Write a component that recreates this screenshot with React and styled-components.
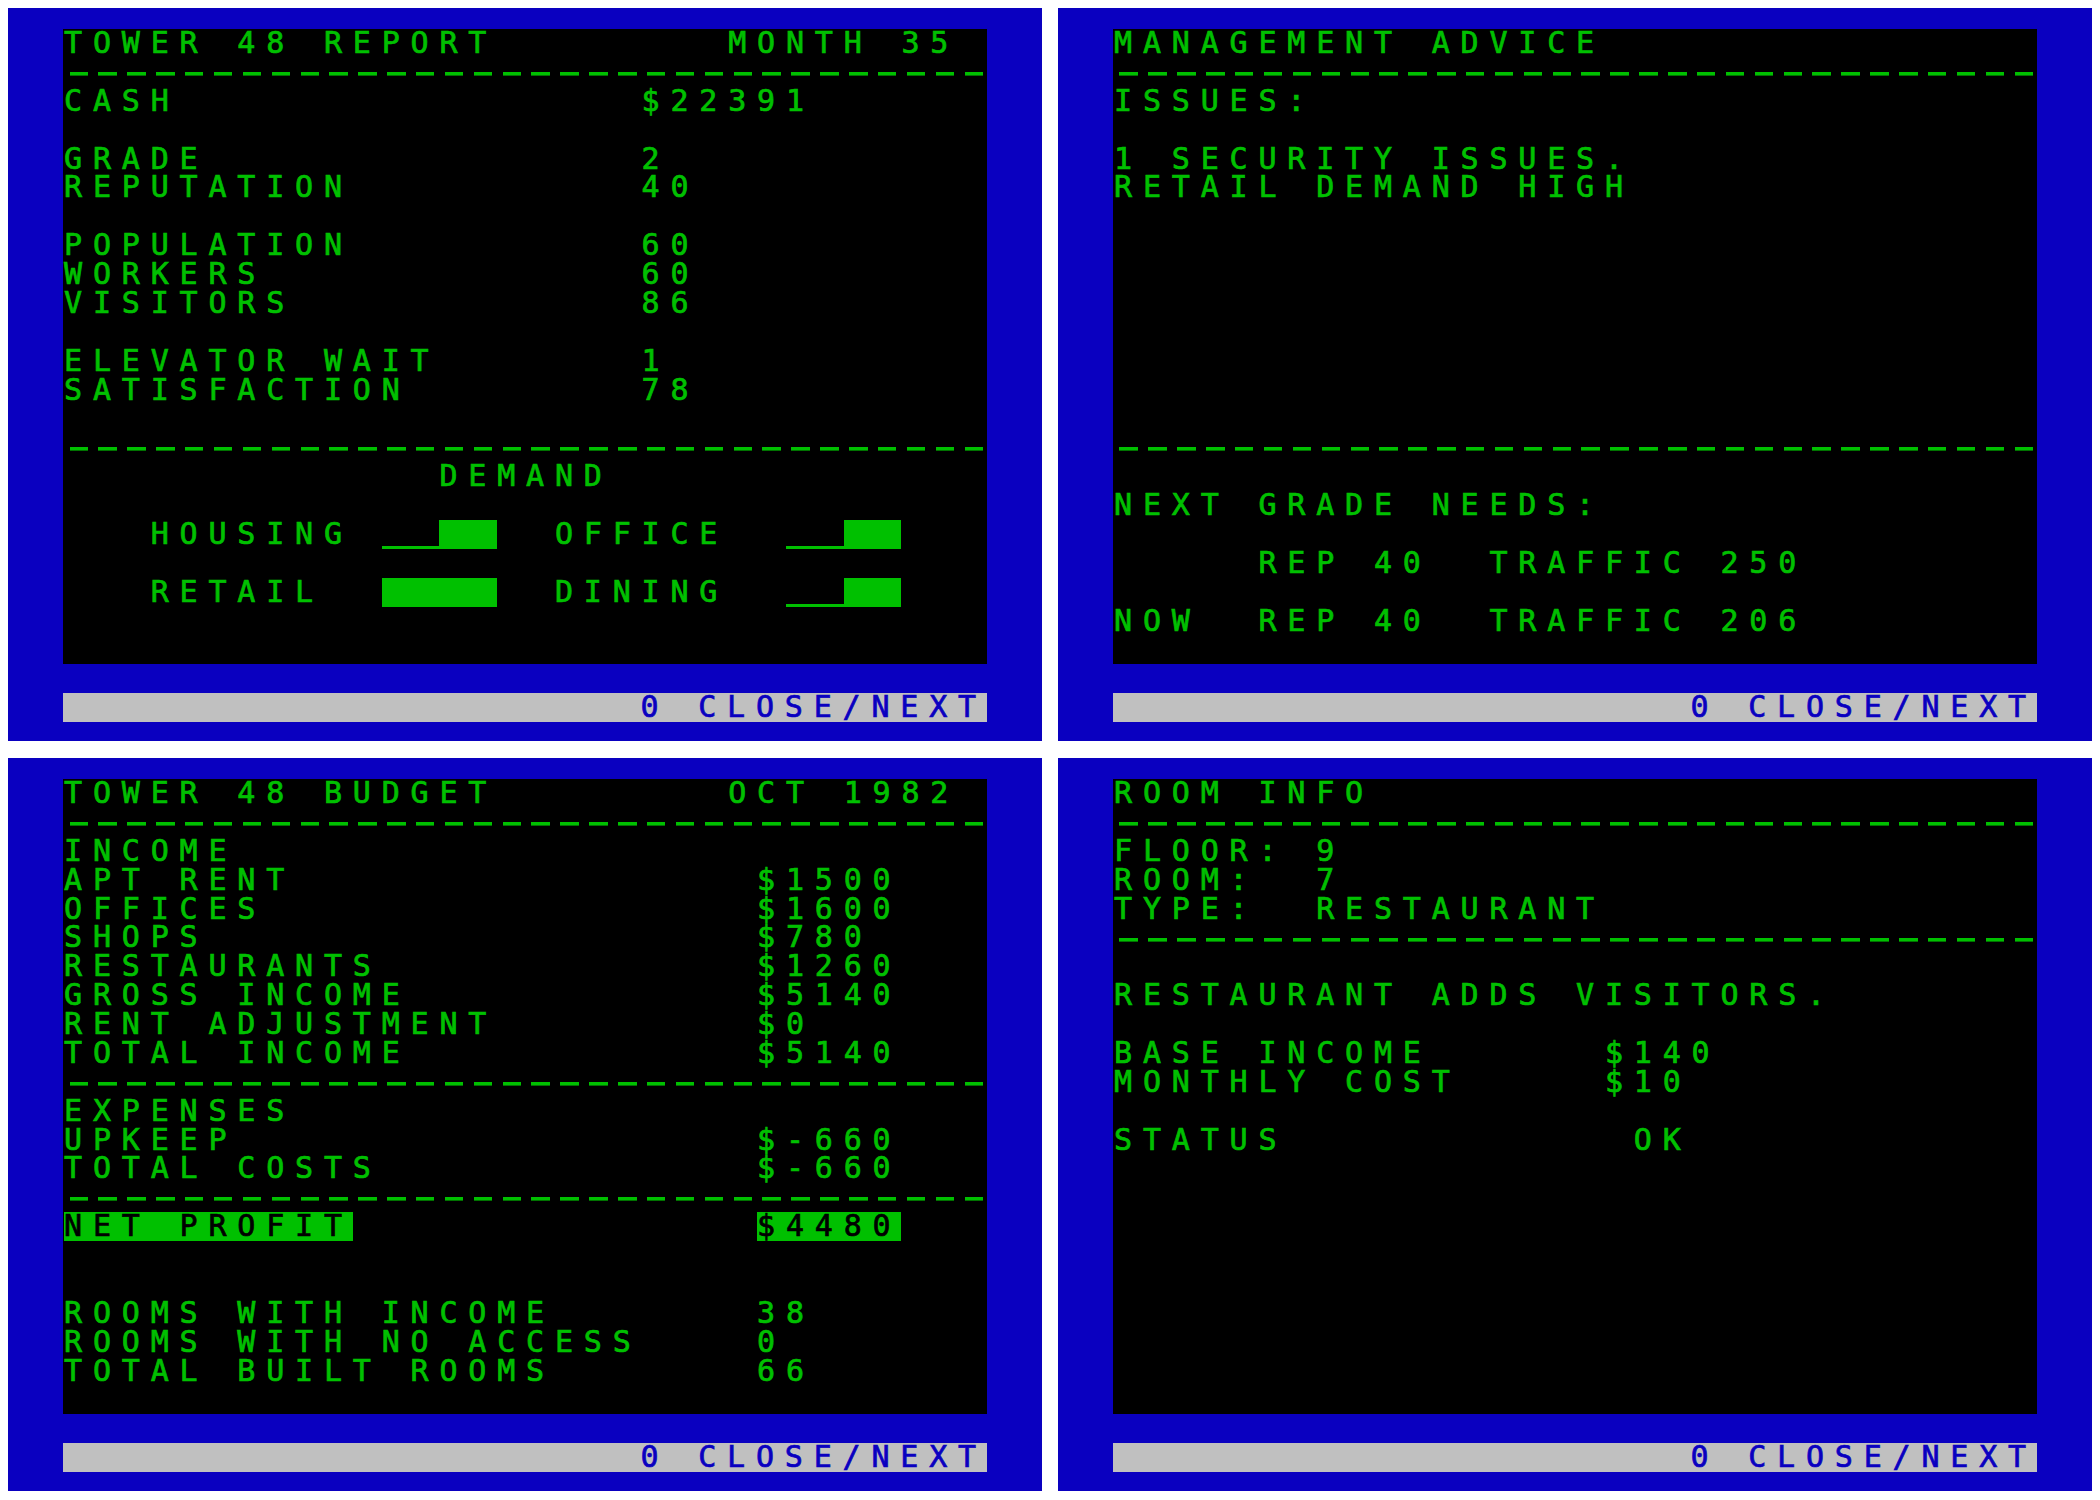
import React from 'react';
import styled, { createGlobalStyle } from 'styled-components';

// one character cell of the emulated 32x24 text screen
const CW = 28.875;
const CH = 28.875;
const PX = 3.6; // one "pixel" of the 8x8 font
const GREEN = '#00c000';
const BLUE = '#0a00c0';
const GREY = '#c0c0c0';

const GlobalStyle = createGlobalStyle`
  body {
    margin: 8px;
    background: #ffffff;
  }
`;

const Page = styled.div`
  display: grid;
  grid-template-columns: 1034px 1034px;
  column-gap: 16px;
  row-gap: 17px;
`;

const Monitor = styled.div`
  box-sizing: border-box;
  height: 733px;
  padding: 21px 55px 19px 55px;
  background: ${BLUE};
  display: flex;
  flex-direction: column;
  font-family: "DejaVu Sans Mono", "Liberation Mono", monospace;
  font-size: 30px;
  letter-spacing: ${CW - 18.06}px;
  -webkit-text-stroke: 0.7px currentColor;
`;

const Screen = styled.div`
  height: ${22 * CH}px;
  flex: none;
  background: #000;
  color: ${GREEN};
  display: flex;
  flex-direction: column;
`;

const BorderRow = styled.div`
  height: ${CH}px;
  flex: none;
`;

const StatusBar = styled.div`
  height: ${CH}px;
  flex: none;
  background: ${GREY};
  color: ${BLUE};
  line-height: ${CH}px;
  text-align: right;
  white-space: pre;
`;

const Row = styled.div`
  display: flex;
  flex: none;
  height: ${CH}px;
  line-height: ${CH}px;
  white-space: pre;
  padding-left: 1px;
`;

const Gap = styled.div`
  flex: none;
  height: ${p => (p.$rows || 1) * CH}px;
`;

const Field = styled.span`
  flex: none;
  width: ${p => (p.$cols ? `${p.$cols * CW}px` : 'auto')};
  height: ${CH}px;
  ${p => p.$inverse && `
    background: ${GREEN};
    color: #000;
  `}
`;

const Divider = styled.div`
  flex: none;
  height: ${CH}px;
  background-image: repeating-linear-gradient(
    90deg,
    transparent 0 6.5px,
    ${GREEN} 6.5px 25px,
    transparent 25px ${CW}px
  );
  background-size: 100% ${PX}px;
  background-position: 0 14.2px;
  background-repeat: no-repeat;
`;

const BarCell = styled.span`
  flex: none;
  box-sizing: border-box;
  width: ${CW}px;
  height: ${CH}px;
  ${p => p.$on
    ? `background: ${GREEN};`
    : `border-bottom: ${PX}px solid ${GREEN};`}
`;

const Line = ({ label, value, at }) => (
  <Row>
    <Field $cols={at}>{label}</Field>
    {value && <Field>{value}</Field>}
  </Row>
);

const DemandBar = ({ level }) => (
  <>
    {[0, 1, 2, 3].map(i => <BarCell key={i} $on={i >= 4 - level} />)}
  </>
);

const DemandRow = ({ left, leftLevel, right, rightLevel }) => (
  <Row>
    <Field $cols={3} />
    <Field $cols={8}>{left}</Field>
    <DemandBar level={leftLevel} />
    <Field $cols={2} />
    <Field $cols={8}>{right}</Field>
    <DemandBar level={rightLevel} />
  </Row>
);

const Terminal = ({ children }) => (
  <Monitor>
    <Screen>{children}</Screen>
    <BorderRow />
    <StatusBar>0 CLOSE/NEXT</StatusBar>
  </Monitor>
);

const ReportScreen = () => (
  <Terminal>
    <Line label="TOWER 48 REPORT" value="MONTH 35" at={23} />
    <Divider />
    <Line label="CASH" value="$22391" at={20} />
    <Gap />
    <Line label="GRADE" value="2" at={20} />
    <Line label="REPUTATION" value="40" at={20} />
    <Gap />
    <Line label="POPULATION" value="60" at={20} />
    <Line label="WORKERS" value="60" at={20} />
    <Line label="VISITORS" value="86" at={20} />
    <Gap />
    <Line label="ELEVATOR WAIT" value="1" at={20} />
    <Line label="SATISFACTION" value="78" at={20} />
    <Gap />
    <Divider />
    <Line label="" value="DEMAND" at={13} />
    <Gap />
    <DemandRow left="HOUSING" leftLevel={2} right="OFFICE" rightLevel={2} />
    <Gap />
    <DemandRow left="RETAIL" leftLevel={4} right="DINING" rightLevel={2} />
  </Terminal>
);

const AdviceScreen = () => (
  <Terminal>
    <Line label="MANAGEMENT ADVICE" />
    <Divider />
    <Line label="ISSUES:" />
    <Gap />
    <Line label="1 SECURITY ISSUES." />
    <Line label="RETAIL DEMAND HIGH" />
    <Gap $rows={8} />
    <Divider />
    <Gap />
    <Line label="NEXT GRADE NEEDS:" />
    <Gap />
    <Line label="     REP 40  TRAFFIC 250" />
    <Gap />
    <Line label="NOW  REP 40  TRAFFIC 206" />
  </Terminal>
);

const budgetIncome = [
  ['APT RENT', '$1500'],
  ['OFFICES', '$1600'],
  ['SHOPS', '$780'],
  ['RESTAURANTS', '$1260'],
  ['GROSS INCOME', '$5140'],
  ['RENT ADJUSTMENT', '$0'],
  ['TOTAL INCOME', '$5140'],
];

const BudgetScreen = () => (
  <Terminal>
    <Line label="TOWER 48 BUDGET" value="OCT 1982" at={23} />
    <Divider />
    <Line label="INCOME" />
    {budgetIncome.map(([label, value]) => (
      <Line key={label} label={label} value={value} at={24} />
    ))}
    <Divider />
    <Line label="EXPENSES" />
    <Line label="UPKEEP" value="$-660" at={24} />
    <Line label="TOTAL COSTS" value="$-660" at={24} />
    <Divider />
    <Row>
      <Field $cols={10} $inverse>NET PROFIT</Field>
      <Field $cols={14} />
      <Field $cols={5} $inverse>$4480</Field>
    </Row>
    <Gap $rows={2} />
    <Line label="ROOMS WITH INCOME" value="38" at={24} />
    <Line label="ROOMS WITH NO ACCESS" value="0" at={24} />
    <Line label="TOTAL BUILT ROOMS" value="66" at={24} />
  </Terminal>
);

const RoomScreen = () => (
  <Terminal>
    <Line label="ROOM INFO" />
    <Divider />
    <Line label="FLOOR:" value="9" at={7} />
    <Line label="ROOM:" value="7" at={7} />
    <Line label="TYPE:" value="RESTAURANT" at={7} />
    <Divider />
    <Gap />
    <Line label="RESTAURANT ADDS VISITORS." />
    <Gap />
    <Line label="BASE INCOME" value="$140" at={17} />
    <Line label="MONTHLY COST" value="$10" at={17} />
    <Gap />
    <Line label="STATUS" value="OK" at={18} />
  </Terminal>
);

export default function App() {
  return (
    <>
      <GlobalStyle />
      <Page>
        <ReportScreen />
        <AdviceScreen />
        <BudgetScreen />
        <RoomScreen />
      </Page>
    </>
  );
}
